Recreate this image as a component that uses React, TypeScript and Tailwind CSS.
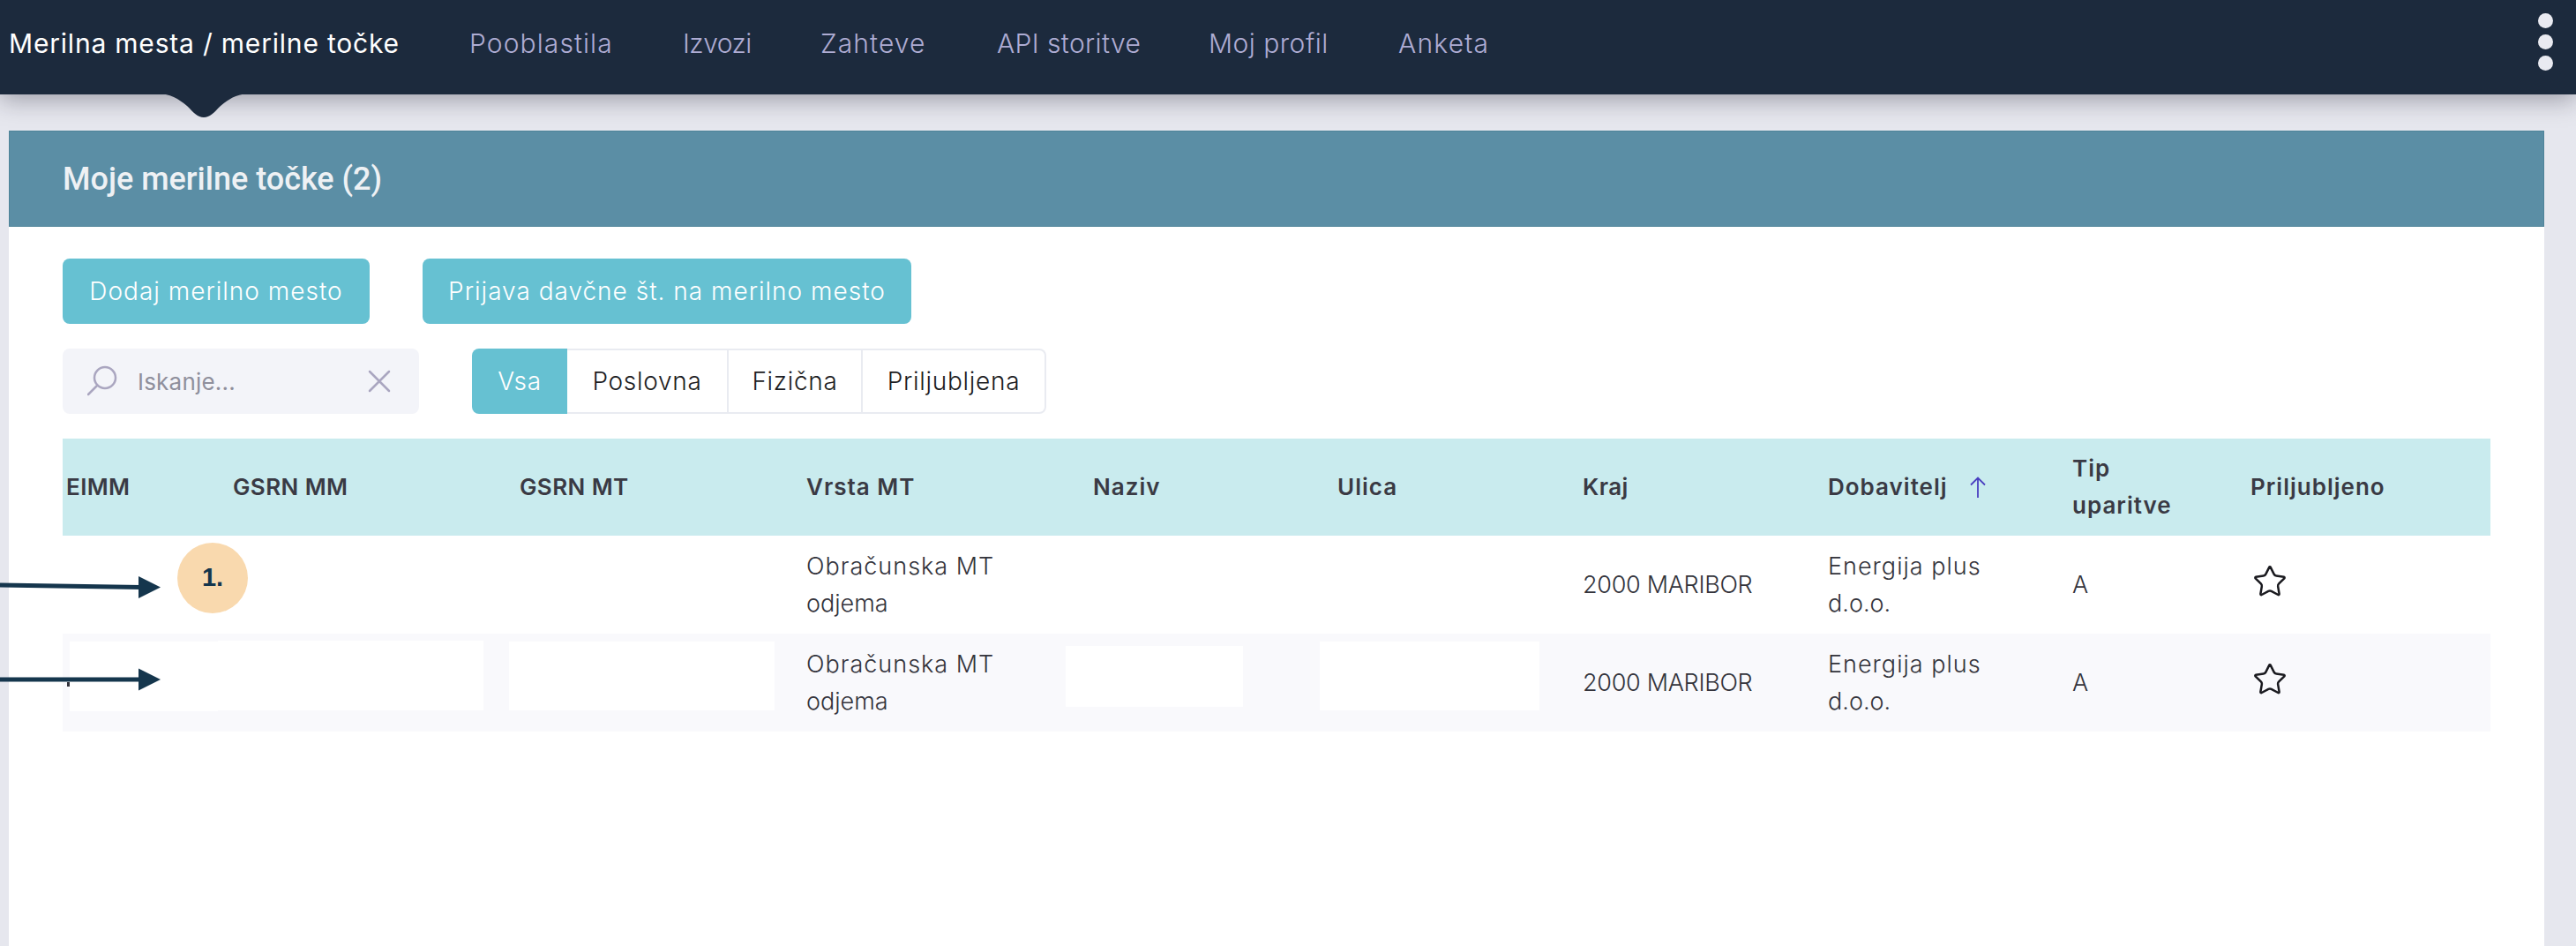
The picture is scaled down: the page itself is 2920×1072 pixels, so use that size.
import { Star } from "lucide-react";

const poppins = "font-['Inter','Liberation_Sans',sans-serif]";

const navItems = [
  { label: "Pooblastila", w: "w-[163px]", t: "tracking-[1.1px]" },
  { label: "Izvozi", w: "w-[77px]", t: "tracking-[-0.5px]" },
  { label: "Zahteve", w: "w-[121px]", t: "tracking-[1.1px]" },
  { label: "API storitve", w: "w-[161px]", t: "tracking-[0.4px]" },
  { label: "Moj profil", w: "w-[136px]", t: "tracking-[0.5px]" },
  { label: "Anketa", w: "w-[103px]", t: "tracking-[1.2px]" },
];

const gridCols =
  "grid grid-cols-[189px_325px_325px_325px_277px_278px_278px_277px_202px_276px]";

function Head({ children, extra, caps }: { children: React.ReactNode; extra?: React.ReactNode; caps?: boolean }) {
  return (
    <div
      className={`flex items-center pl-[4px] text-[26px] leading-[42px] font-semibold text-[#3a3a44] ${
        caps ? "tracking-[0.4px]" : "tracking-[1px]"
      }`}
    >
      <span>{children}</span>
      {extra}
    </div>
  );
}

function Cell({ children }: { children?: React.ReactNode }) {
  return (
    <div className="flex items-center pl-[4px] pt-[1px] text-[27px] leading-[42px] font-light text-[#33333b]">
      {children}
    </div>
  );
}

function Row({ striped, children }: { striped?: boolean; children?: React.ReactNode }) {
  return (
    <div className={`relative ${gridCols} h-[111px] ${striped ? "bg-[#f9f9fc]" : "bg-white"}`}>
      <Cell />
      <Cell />
      <Cell />
      <Cell>
        <span>
          <span className="tracking-[1px]">Obračunska MT</span>
          <br />
          odjema
        </span>
      </Cell>
      <Cell />
      <Cell />
      <Cell>
        <span className="tracking-[-0.3px]">2000 MARIBOR</span>
      </Cell>
      <Cell>
        <span>
          <span className="tracking-[1px]">Energija plus</span>
          <br />
          d.o.o.
        </span>
      </Cell>
      <Cell>A</Cell>
      <div className="flex items-center pb-[8px] pl-[6px]">
        <Star size={40} strokeWidth={1.5} className="text-[#1a1a1f]" />
      </div>
      {children}
    </div>
  );
}

function Arrow({ className, y1, y2 }: { className: string; y1: number; y2: number }) {
  return (
    <svg className={className} width="190" height="30" viewBox="0 0 190 30">
      <path d={`M0 ${y1} L160 ${y2}`} stroke="#15364d" strokeWidth="5" fill="none" />
      <path d={`M157 ${y2 - 12.5} L182 ${y2} L157 ${y2 + 12.5} Z`} fill="#15364d" />
    </svg>
  );
}

export default function App() {
  return (
    <div className={`relative h-[1072px] w-full overflow-hidden bg-[#e6e7ee] ${poppins}`}>
      <nav className="relative z-10 flex h-[107px] items-center gap-[79px] bg-[#1c2a3d] pb-[12px] pl-[10px] pr-[26px] shadow-[0_6px_26px_rgba(20,20,40,0.35)]">
        <a className="w-[443px] whitespace-nowrap pt-[3px] text-[30px] tracking-[0.8px] text-white">Merilna mesta / merilne točke</a>
        {navItems.map((n) => (
          <a key={n.label} className={`${n.w} ${n.t} whitespace-nowrap pt-[3px] text-[30px] font-light text-[#aeacd3]`}>
            {n.label}
          </a>
        ))}
        <div className="ml-auto flex flex-col gap-[7px]">
          <span className="h-[17px] w-[17px] rounded-full bg-[#e9eaf1]" />
          <span className="h-[17px] w-[17px] rounded-full bg-[#e9eaf1]" />
          <span className="h-[17px] w-[17px] rounded-full bg-[#e9eaf1]" />
        </div>
        <svg className="absolute left-[176px] top-[106px]" width="110" height="28" viewBox="0 0 110 28">
          <path d="M0 0 C18 0 26 6 36 14 C44 22 48 27 55 27 C62 27 66 22 74 14 C84 6 92 0 110 0 Z" fill="#1c2a3d" />
        </svg>
      </nav>

      <main className="ml-[10px] mr-[36px] mt-[41px] h-[924px] bg-white">
        <header className="flex h-[109px] items-center border border-[#4f8499] bg-[#5b8ea5] pl-[60px] font-['Roboto',sans-serif] text-[36px] font-medium text-[#eef1f4]">
          Moje merilne točke (2)
        </header>

        <section className="px-[61px] pt-[36px]">
          <div className="flex gap-[60px]">
            <button className="flex h-[74px] w-[348px] items-center justify-center rounded-lg bg-[#66c1d2] text-[28px] font-light tracking-[1px] text-white">
              Dodaj merilno mesto
            </button>
            <button className="flex h-[74px] w-[554px] items-center justify-center rounded-lg bg-[#66c1d2] text-[28px] font-light tracking-[1px] text-white">
              Prijava davčne št. na merilno mesto
            </button>
          </div>

          <div className="mt-[28px] flex gap-[60px]">
            <div className="flex h-[74px] w-[404px] items-center rounded-lg bg-[#f3f4f9] pl-[28px] pr-[32px]">
              <svg width="36" height="38" viewBox="0 0 36 38" fill="none" stroke="#aaa6c0" strokeWidth="2.5">
                <circle cx="20" cy="15" r="12" />
                <path d="M11 24 L1 34" strokeLinecap="round" />
              </svg>
              <span className="ml-[21px] text-[26px] font-normal tracking-[0.2px] text-[#8f8f9c]">Iskanje...</span>
              <svg className="ml-auto" width="26" height="26" viewBox="0 0 26 26" stroke="#aaa6c0" strokeWidth="2.5" strokeLinecap="round">
                <path d="M2 2 L24 24 M24 2 L2 24" />
              </svg>
            </div>

            <div className="flex h-[74px] text-[28px] font-light tracking-[0.7px] text-[#1c1c22]">
              <div className="flex w-[108px] items-center justify-center rounded-l-lg bg-[#66c1d2] text-white">Vsa</div>
              <div className="flex w-[183px] items-center justify-center border-y-2 border-r-2 border-[#e9ebf1]">Poslovna</div>
              <div className="flex w-[152px] items-center justify-center border-y-2 border-r-2 border-[#e9ebf1]">Fizična</div>
              <div className="flex w-[208px] items-center justify-center rounded-r-lg border-y-2 border-r-2 border-[#e9ebf1]">Priljubljena</div>
            </div>
          </div>

          <div className="mt-[28px] w-[2752px]">
            <div className={`${gridCols} h-[110px] bg-[#c9ebee]`}>
              <Head caps>EIMM</Head>
              <Head caps>GSRN MM</Head>
              <Head caps>GSRN MT</Head>
              <Head>Vrsta MT</Head>
              <Head>Naziv</Head>
              <Head>Ulica</Head>
              <Head caps>Kraj</Head>
              <Head
                extra={
                  <svg className="ml-[25px]" width="18" height="24" viewBox="0 0 18 24" fill="none" stroke="#4a3fc0" strokeWidth="1.8">
                    <path d="M9 24 V1.5 M1 9.5 L9 1.5 L17 9.5" />
                  </svg>
                }
              >
                Dobavitelj
              </Head>
              <Head>
                Tip
                <br />
                uparitve
              </Head>
              <Head>Priljubljeno</Head>
            </div>
            <Row />
            <Row striped>
              <span className="absolute left-[5px] top-[55px] h-[5px] w-[3px] bg-[#33333b]" />
              <span className="absolute left-[8px] top-[9px] h-[79px] w-[168px] bg-white" />
              <span className="absolute left-[176px] top-[8px] h-[79px] w-[301px] bg-white" />
              <span className="absolute left-[506px] top-[9px] h-[78px] w-[301px] bg-white" />
              <span className="absolute left-[1137px] top-[14px] h-[69px] w-[201px] bg-white" />
              <span className="absolute left-[1425px] top-[9px] h-[78px] w-[249px] bg-white" />
            </Row>
          </div>
        </section>
      </main>

      <Arrow className="absolute left-0 top-[650px]" y1={13} y2={15.5} />
      <Arrow className="absolute left-0 top-[755px]" y1={15} y2={15} />
      <div className="absolute left-[201px] top-[615px] flex h-[80px] w-[80px] items-center justify-center rounded-full bg-[#f9d9ae] font-['Liberation_Sans',sans-serif] text-[29px] font-bold text-[#15364d]">
        1.
      </div>
    </div>
  );
}
